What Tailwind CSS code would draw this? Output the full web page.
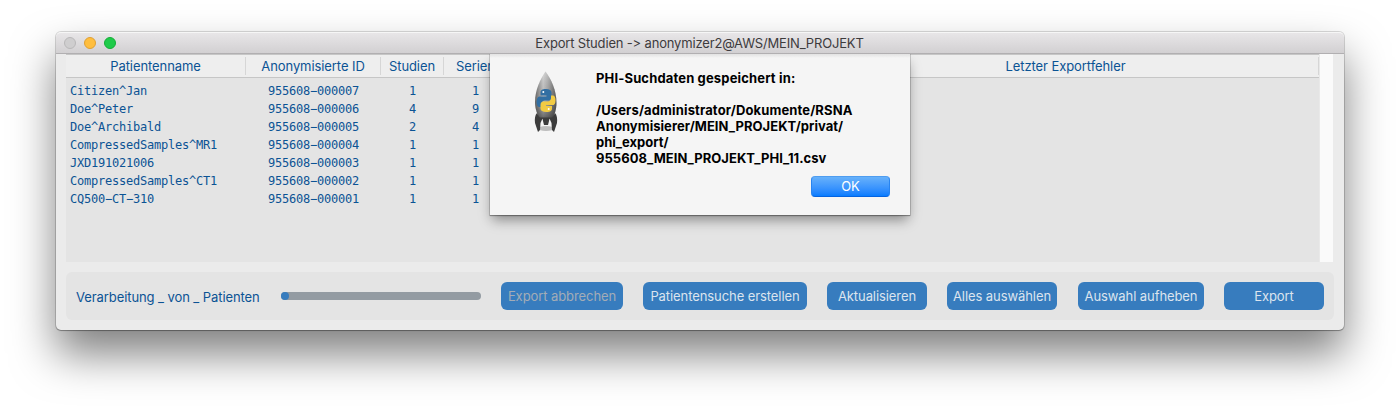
<!DOCTYPE html>
<html lang="de">
<head>
<meta charset="utf-8">
<title>Export Studien</title>
<script src="https://cdn.jsdelivr.net/npm/@tailwindcss/browser@4"></script>
</head>
<body class="h-[410px] overflow-hidden bg-white pt-8 pl-14 font-[Inter,sans-serif] text-[13px]">
<main class="relative flex h-[298px] w-[1288px] flex-col rounded-[5px] bg-[#ebebeb] shadow-[0_0_0_1px_rgba(0,0,0,0.14),0_1px_1px_rgba(0,0,0,0.25),0_24px_44px_rgba(0,0,0,0.5)]">
  <header class="flex h-[22px] shrink-0 items-center rounded-t-[5px] border-t border-b border-t-[#f6f6f6] border-b-[#b1afb1] bg-linear-to-b from-[#e8e6e8] to-[#d2d0d2] px-2">
    <div class="flex w-[52px] shrink-0 gap-2">
      <i class="size-3 rounded-full border border-[#b9b8b9] bg-[#cfcecf]"></i>
      <i class="size-3 rounded-full border border-[#e0a032] bg-[#ffbe3e]"></i>
      <i class="size-3 rounded-full border border-[#14ae36] bg-[#1fcb4a]"></i>
    </div>
    <h1 class="flex-1 pr-[53px] text-center leading-5 whitespace-nowrap text-[#3d3b3d]"><span class="tracking-[-0.17px]">Export Studien -&gt; anonymizer2@AWS/MEIN_PROJEKT</span></h1>
  </header>

  <section class="mx-2.5 flex h-52 shrink-0 text-[#0b5394]">
    <div class="w-[1253px] bg-[#e4e4e4]">
      <div class="flex h-6 items-center border-t border-b border-t-[#c6c6c6] border-b-[#c6c6c6] bg-[#eeeeee] text-center leading-[18px] tracking-[-0.08px]">
        <div class="h-[18px] w-[180px] border-r border-[#d6d6d6]">Patientenname</div>
        <div class="h-[18px] w-[135px] border-r border-[#d6d6d6]">Anonymisierte ID</div>
        <div class="h-[18px] w-[63px] border-r border-[#d6d6d6]">Studien</div>
        <div class="h-[18px] w-[63px] border-r border-[#d6d6d6] pl-px">Serien</div>
        <div class="h-[18px] w-[304px] border-r border-[#d6d6d6]"></div>
        <div class="h-[18px] flex-1 border-r border-[#d6d6d6] pl-0.5">Letzter Exportfehler</div>
      </div>
      <div class="grid auto-rows-[18px] grid-cols-[176px_135px_63px_63px] pt-1 pl-1 text-center font-['DejaVu_Sans_Mono',monospace] text-[12px] leading-[18px] tracking-[-0.224px]">
        <span class="text-left">Citizen^Jan</span><span>955608−000007</span><span>1</span><span>1</span>
        <span class="text-left">Doe^Peter</span><span>955608−000006</span><span>4</span><span>9</span>
        <span class="text-left">Doe^Archibald</span><span>955608−000005</span><span>2</span><span>4</span>
        <span class="text-left">CompressedSamples^MR1</span><span>955608−000004</span><span>1</span><span>1</span>
        <span class="text-left">JXD191021006</span><span>955608−000003</span><span>1</span><span>1</span>
        <span class="text-left">CompressedSamples^CT1</span><span>955608−000002</span><span>1</span><span>1</span>
        <span class="text-left">CQ500−CT−310</span><span>955608−000001</span><span>1</span><span>1</span>
      </div>
    </div>
    <div class="w-3.5 border-l border-[#e9e9e9] bg-[#fafafa]"></div>
  </section>

  <footer class="mx-2.5 mt-2.5 flex h-12 shrink-0 items-center rounded-md bg-[#e4e4e4] pl-2.5 tracking-[-0.08px] whitespace-nowrap text-[#dce4ee]">
    <span class="w-[205px] pt-[3px] text-[#0b5394]">Verarbeitung _ von _ Patienten</span>
    <div class="mr-5 h-2 w-[200px] rounded-full bg-[#939ba2]"><div class="size-2 rounded-full bg-[#377cbe]"></div></div>
    <button class="mr-5 h-7 w-[122px] rounded-md bg-[#377cbe] pt-0.5 text-[#a3acb6]">Export abbrechen</button>
    <button class="mr-5 h-7 w-[164px] rounded-md bg-[#377cbe] pt-0.5">Patientensuche erstellen</button>
    <button class="mr-5 h-7 w-[100px] rounded-md bg-[#377cbe] pt-0.5">Aktualisieren</button>
    <button class="mr-[21px] h-7 w-[110px] rounded-md bg-[#377cbe] pt-0.5">Alles auswählen</button>
    <button class="mr-5 h-7 w-[126px] rounded-md bg-[#377cbe] pt-0.5">Auswahl aufheben</button>
    <button class="h-7 w-[100px] rounded-md bg-[#377cbe] pt-0.5">Export</button>
  </footer>

  <div class="absolute top-[22px] left-[404px] h-[210px] w-[480px] overflow-hidden px-[30px]">
    <div role="dialog" class="flex h-[161px] w-[420px] bg-[#f5f5f5] bg-[linear-gradient(#e2e2e2,#f5f5f5_4px)] pt-4 pl-10 shadow-[0_0_0_1px_rgba(0,0,0,0.12),0_1px_1px_rgba(0,0,0,0.25),0_7px_12px_-2px_rgba(0,0,0,0.4)]">
      <svg class="h-16 w-8 shrink-0" viewBox="0 0 32 64">
        <defs>
          <linearGradient id="hull"><stop offset="0" stop-color="#666"/><stop offset=".38" stop-color="#c8c8c8"/><stop offset=".6" stop-color="#a6a6a6"/><stop offset="1" stop-color="#555"/></linearGradient>
          <linearGradient id="shade" x2="0" y2="1"><stop offset="0" stop-color="#fff" stop-opacity=".3"/><stop offset=".6" stop-color="#555" stop-opacity=".1"/><stop offset="1" stop-color="#222" stop-opacity=".6"/></linearGradient>
        </defs>
        <ellipse cx="16" cy="58.500" rx="8" ry="2.500" fill="#bdbdbd"/>
        <path d="M15.500 1.500C21 9 26.500 20 26.500 33c0 6-2 12-4 15.500H9.500C7.500 45 5 39 5 32 5 20 10.500 9 15.500 1.500z" fill="url(#hull)"/>
        <path d="M15.500 1.500C21 9 26.500 20 26.500 33c0 6-2 12-4 15.500H9.500C7.500 45 5 39 5 32 5 20 10.500 9 15.500 1.500z" fill="url(#shade)"/>
        <path d="M7 43c-2 2-2.500 6-2 10l3 9 2-2 .500-7 2-4.500.500 2.500 1 4h4l1-4 .500-2.500 2 4.500 .500 7 2 2 3-9c.500-4 0-8-2-10-1 2-2 4-3 4.500H10c-1-.500-2-2.500-3-4.500z" fill="#3c3c3c"/>
        <path d="M16 19c-4 0-5.500 1.500-5.500 3.500v3H16.500v1H9.500C7.500 26.500 6.500 29 6.500 32s1 5 3 5h2v-3c0-2 1.500-3.500 3.500-3.500h3.500c2 0 3-1.500 3-3.500v-4.500c0-2-2-3.500-5.500-3.500z" fill="#326fa3"/>
        <path d="M16.500 42c4 0 5.500-1.500 5.500-3.500V36H16v-1h7c2 0 2.500-2.500 2.500-5s-1-4.500-2.500-4.500H21V28c0 2-1.500 3.500-3.500 3.500h-4c-2 0-3 1.500-3 3.500v3.500c0 2 2 3.500 6 3.500z" fill="#f2cb43"/>
        <circle cx="13.300" cy="22" r="1" fill="#fff"/><circle cx="18.700" cy="39" r="1" fill="#fff"/>
      </svg>
      <div class="flex w-[328px] flex-col pl-[34px] font-bold text-black">
        <p class="leading-4 whitespace-nowrap"><span class="tracking-[0.15px]">PHI-Suchdaten gespeichert in:</span><br><br><span class="tracking-[0.13px]">/Users/administrator/Dokumente/RSNA</span><br><span class="tracking-[0.05px]">Anonymisierer/MEIN_PROJEKT/privat/</span><br>phi_export/<br><span class="tracking-[0.04px]">955608_MEIN_PROJEKT_PHI_11.csv</span></p>
        <button class="mt-2.5 h-[21px] w-[79px] self-end rounded-[4px] border border-t-[#4f9df0] border-r-[#2884f0] border-b-[#0563e0] border-l-[#2884f0] bg-linear-to-b from-[#67b1fa] to-[#057cff] leading-[19px] font-normal text-white">OK</button>
      </div>
    </div>
  </div>
</main>
</body>
</html>
